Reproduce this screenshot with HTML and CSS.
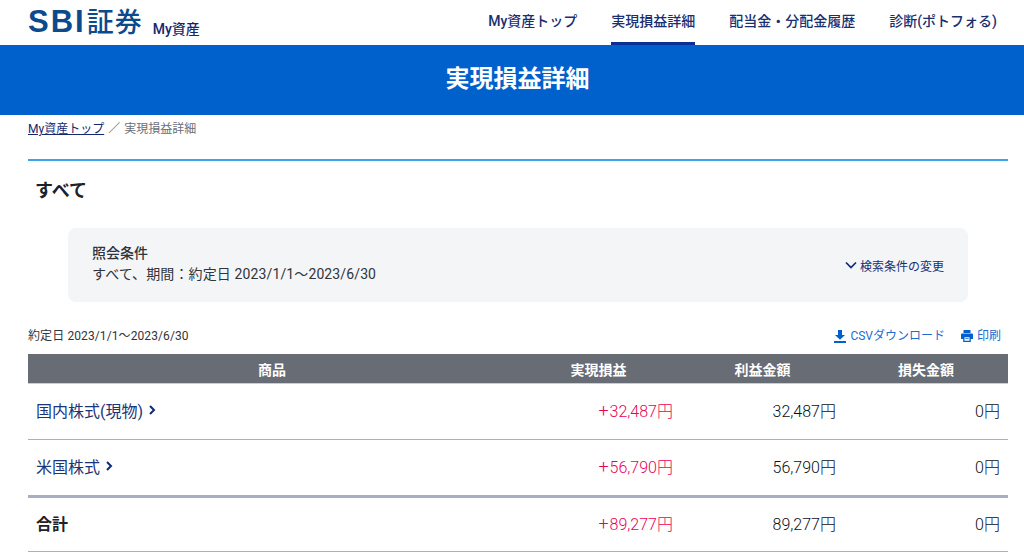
FILE: index.html
```html
<!DOCTYPE html>
<html lang="ja">
<head>
<meta charset="utf-8">
<title>実現損益詳細</title>
<link rel="stylesheet" href="styles.css">
</head>
<body>
<header class="topbar">
  <div class="brand"><span class="brand-sbi">SBI</span><span class="brand-sec">証券</span><span class="brand-sub">My資産</span></div>
  <nav class="nav">
    <a class="nav-item">My資産トップ</a>
    <a class="nav-item is-active">実現損益詳細</a>
    <a class="nav-item">配当金・分配金履歴</a>
    <a class="nav-item">診断(ポトフォる)</a>
  </nav>
</header>
<div class="hero"><h1 class="hero-title">実現損益詳細</h1></div>
<main class="main">
  <div class="crumbs"><a class="crumb-link">My資産トップ</a><span class="crumb-sep">／</span><span>実現損益詳細</span></div>
  <section class="section">
    <h2 class="section-title">すべて</h2>
    <div class="cond">
      <div class="cond-body">
        <div class="cond-title">照会条件</div>
        <div class="cond-text">すべて、期間：約定日 2023/1/1～2023/6/30</div>
      </div>
      <a class="cond-change">
        <svg class="cond-icon" viewBox="0 0 12 8" width="12" height="8"><path d="M1 1.500l5 5 5-5" fill="none" stroke="#0e2a78" stroke-width="1.700"/></svg>
        検索条件の変更
      </a>
    </div>
    <div class="tools">
      <span class="tools-date">約定日 2023/1/1～2023/6/30</span>
      <div class="tools-links">
        <a class="tool">
          <svg viewBox="0 0 12 13" width="12" height="13"><path d="M4 0h4v5h3L6 9.800 1 5h3zM0 11h12v2H0z" fill="#0060cc"/></svg>
          CSVダウンロード
        </a>
        <a class="tool">
          <svg viewBox="0 0 12 12" width="12" height="12"><path fill="#0060cc" fill-rule="evenodd" d="M2.500 0h7v3h-7zM1 3.600h10a1 1 0 0 1 1 1V9H9.800v3H2.200V9H0V4.600a1 1 0 0 1 1-1zM3.500 7.200v3.600h5V7.200z"/><path fill="#0060cc" d="M4.300 8.300h3.400v.8H4.300z"/></svg>
          印刷
        </a>
      </div>
    </div>
    <table class="table">
      <colgroup><col class="c1"><col class="c2"><col class="c3"><col class="c4"></colgroup>
      <thead>
        <tr><th>商品</th><th>実現損益</th><th>利益金額</th><th>損失金額</th></tr>
      </thead>
      <tbody>
        <tr>
          <td class="name"><a class="link">国内株式(現物)<svg class="chev" viewBox="0 0 7 10" width="7" height="10"><path d="M1 1l4 4-4 4" fill="none" stroke="#0e2a78" stroke-width="2"/></svg></a></td>
          <td class="num plus"><span class="sign">+</span>32,487円</td><td class="num">32,487円</td><td class="num">0円</td>
        </tr>
        <tr class="last">
          <td class="name"><a class="link">米国株式<svg class="chev" viewBox="0 0 7 10" width="7" height="10"><path d="M1 1l4 4-4 4" fill="none" stroke="#0e2a78" stroke-width="2"/></svg></a></td>
          <td class="num plus"><span class="sign">+</span>56,790円</td><td class="num">56,790円</td><td class="num">0円</td>
        </tr>
        <tr class="total">
          <td class="name">合計</td>
          <td class="num plus"><span class="sign">+</span>89,277円</td><td class="num">89,277円</td><td class="num">0円</td>
        </tr>
      </tbody>
    </table>
  </section>
</main>
</body>
</html>
```
FILE: styles.css
```css
* { box-sizing: border-box; }
html, body { margin: 0; padding: 0; height: 559px; overflow: hidden; }
body {
  background: #fff;
  color: #1d2129;
  font-family: Roboto, "Noto Sans CJK JP", sans-serif;
}
.topbar {
  height: 45px;
  padding: 0 27px 0 28px;
  display: flex;
  justify-content: space-between;
  align-items: stretch;
}
.brand { color: #0b4a8c; line-height: 42px; white-space: nowrap; }
.brand-sbi {
  font-family: "Liberation Sans", sans-serif;
  font-weight: 700;
  font-size: 31px;
  letter-spacing: 2px;
}
.brand-sec { font-family: "Noto Sans CJK JP", sans-serif; font-size: 27px; font-weight: 500; letter-spacing: 1px; margin-left: 1px; }
.brand-sub { font-size: 14px; font-weight: 500; color: #14286e; margin-left: 10px; vertical-align: -2px; }
.nav { display: flex; gap: 34px; }
.nav-item {
  font-size: 14px;
  font-weight: 500;
  color: #1a2f70;
  line-height: 42px;
  height: 45px;
  white-space: nowrap;
}
.is-active { border-bottom: 3px solid #0b2f96; }
.hero {
  height: 70px;
  padding-left: 11px;
  background: #0060cc;
  display: flex;
  align-items: center;
  justify-content: center;
}
.hero-title { margin: 0; color: #fff; font-size: 24px; font-weight: 700; line-height: 1.4; }
.main { padding: 0 16px 0 28px; }
.crumbs { height: 44px; padding-top: 5px; font-size: 12px; line-height: 18px; color: #6a6e76; }
.crumb-link { color: #14286e; text-decoration: underline; }
.crumb-sep { margin: 0 4px; }
.section { border-top: 2px solid #3aa5ec; }
.section-title { margin: 0; padding: 18px 0 0 7px; height: 67px; font-size: 18px; font-weight: 700; line-height: 24px; color: #1d2129; }
.cond {
  margin: 0 40px;
  height: 74px;
  padding: 0 24px;
  background: #f4f5f7;
  border-radius: 8px;
  display: flex;
  align-items: center;
  justify-content: space-between;
}
.cond-body { padding-bottom: 2px; }
.cond-title { font-size: 14px; font-weight: 500; line-height: 21px; color: #30343c; }
.cond-text { font-size: 14px; line-height: 21px; color: #30343c; letter-spacing: 0.12px; }
.cond-change { font-size: 12px; color: #1a2f70; display: flex; align-items: center; gap: 3px; }
.tools { height: 52px; padding: 25px 7px 0 0; display: flex; justify-content: space-between; font-size: 12px; line-height: 18px; }
.tools-date { color: #30343c; letter-spacing: 0.1px; }
.tools-links { display: flex; gap: 16px; }
.tool { color: #1f6bd0; display: flex; align-items: center; gap: 4px; height: 18px; }
.table { width: 100%; border-collapse: separate; border-spacing: 0; table-layout: fixed; }
.c1 { width: 488px; }
.c2 { width: 165px; }
.c3 { width: 163px; }
.table th {
  height: 30px;
  padding: 0;
  background: #686c75;
  color: #fff;
  font-size: 14px;
  font-weight: 700;
  text-align: center;
  border-bottom: 1px solid #c9cdd8;
}
.table td { height: 56px; padding: 0 8px 3px; font-size: 16px; border-bottom: 1px solid #aab0be; color: #1d2129; }
.table .last td { border-bottom: 3px solid #a7afc4; height: 58px; }
.table .total td { height: 54px; }
.name { text-align: left; }
.table .total .name { font-weight: 700; }
.link { color: #1c3478; display: inline-flex; align-items: center; gap: 6px; }
.table .num { text-align: right; font-weight: 300; color: #0c0f14; }
.table .plus { color: #ea0058; }
.sign { margin-right: 1px; font-size: 18px; line-height: 1; }
```
